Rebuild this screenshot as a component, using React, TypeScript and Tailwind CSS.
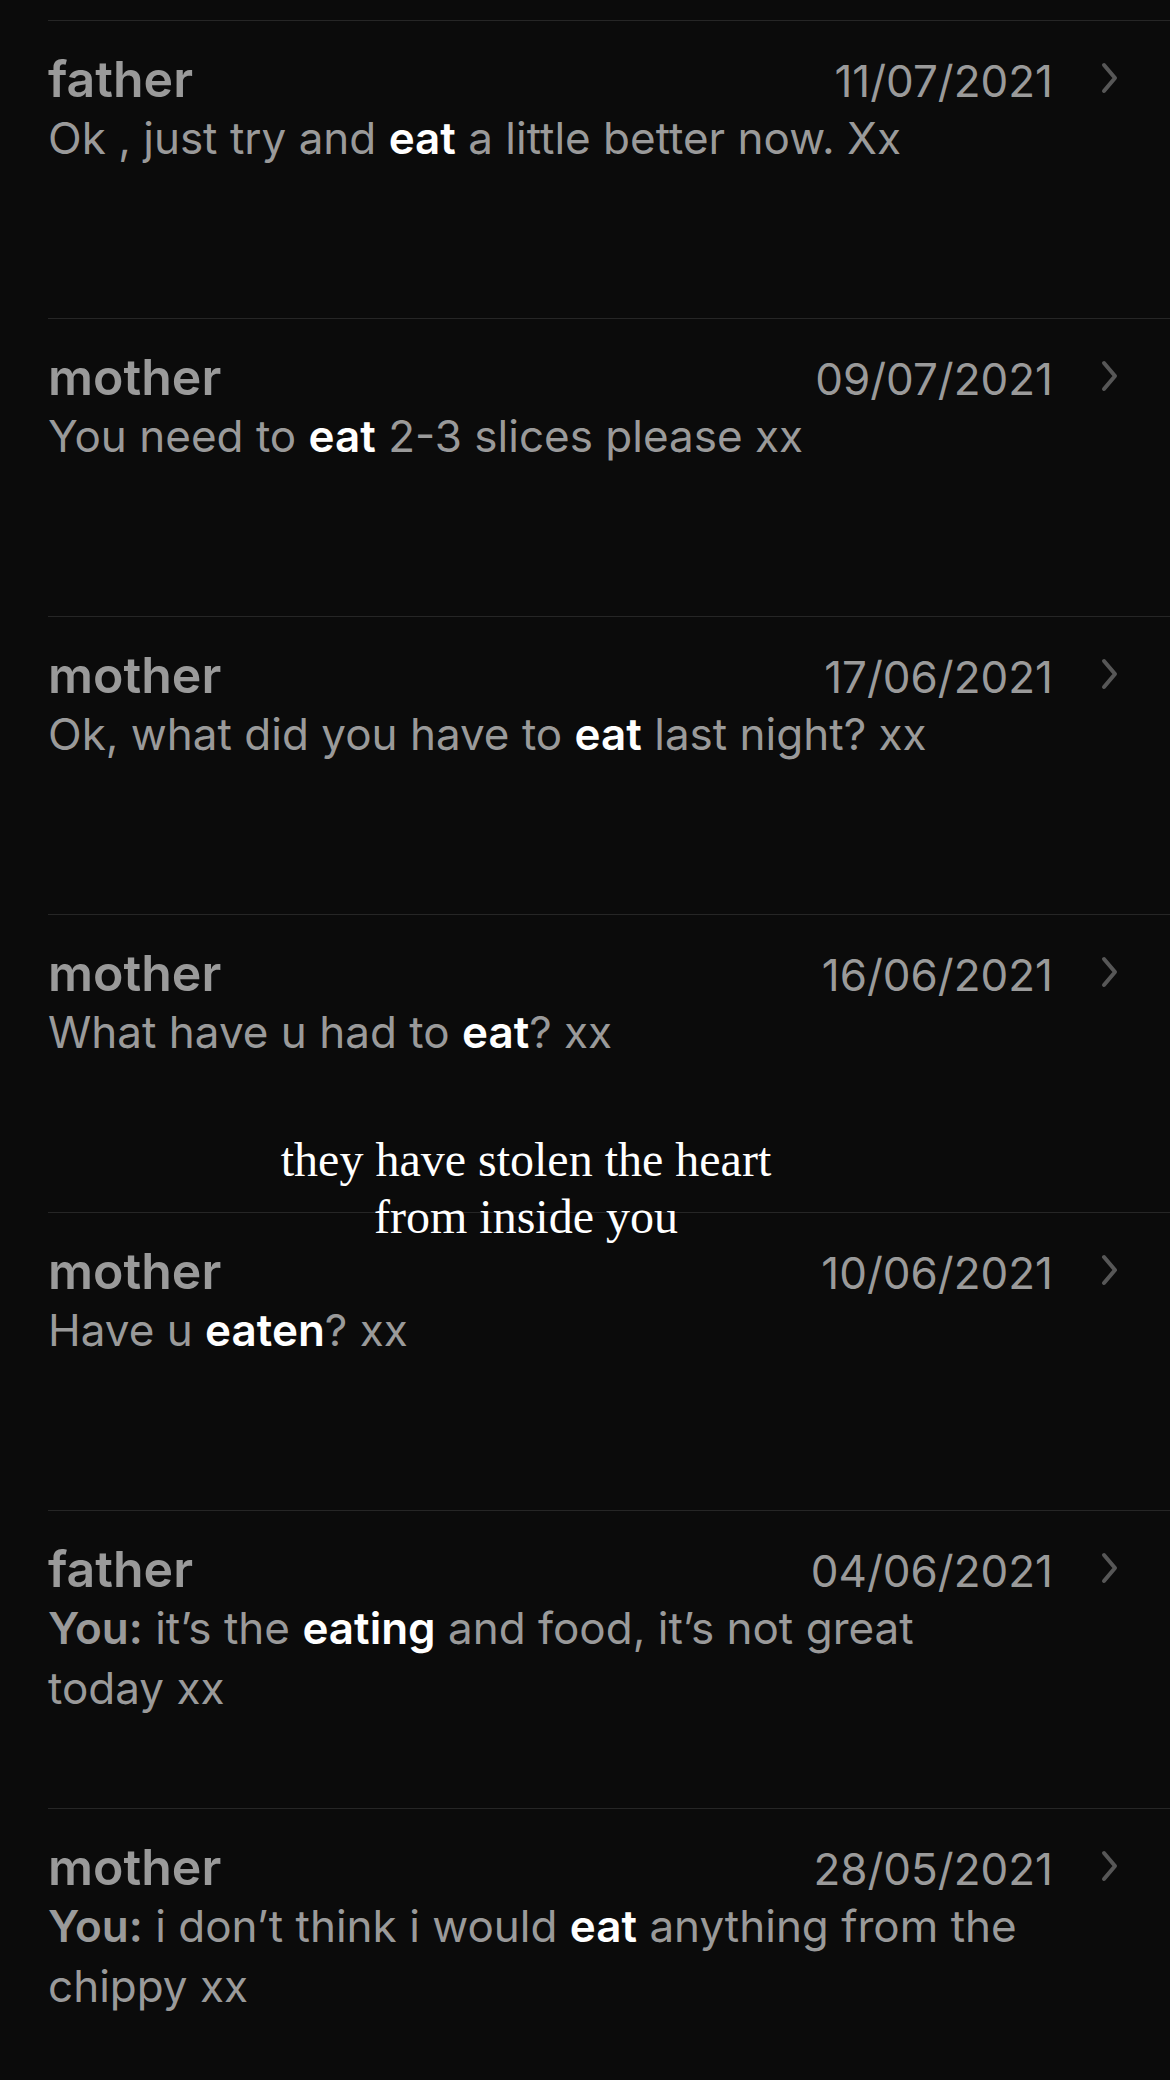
import React from "react";

type Part = { text: string; hit?: boolean; you?: boolean };

type Result = {
  from: string;
  date: string;
  parts: Part[];
};

const results: Result[] = [
  {
    from: "father",
    date: "11/07/2021",
    parts: [{ text: "Ok , just try and " }, { text: "eat", hit: true }, { text: " a little better now. Xx" }],
  },
  {
    from: "mother",
    date: "09/07/2021",
    parts: [{ text: "You need to " }, { text: "eat", hit: true }, { text: " 2-3 slices please xx" }],
  },
  {
    from: "mother",
    date: "17/06/2021",
    parts: [{ text: "Ok, what did you have to " }, { text: "eat", hit: true }, { text: " last night? xx" }],
  },
  {
    from: "mother",
    date: "16/06/2021",
    parts: [{ text: "What have u had to " }, { text: "eat", hit: true }, { text: "? xx" }],
  },
  {
    from: "mother",
    date: "10/06/2021",
    parts: [{ text: "Have u " }, { text: "eaten", hit: true }, { text: "? xx" }],
  },
  {
    from: "father",
    date: "04/06/2021",
    parts: [
      { text: "You:", you: true },
      { text: " it’s the " },
      { text: "eating", hit: true },
      { text: " and food, it’s not great today xx" },
    ],
  },
  {
    from: "mother",
    date: "28/05/2021",
    parts: [
      { text: "You:", you: true },
      { text: " i don’t think i would " },
      { text: "eat", hit: true },
      { text: " anything from the chippy xx" },
    ],
  },
];

function Chevron() {
  return (
    <svg width="22" height="32" viewBox="0 0 22 32" fill="none" className="shrink-0 -translate-y-[3px]">
      <path d="M5 3 L16 16 L5 29" stroke="#575757" strokeWidth="4" strokeLinecap="round" strokeLinejoin="round" />
    </svg>
  );
}

function ResultRow({ item }: { item: Result }) {
  return (
    <div className="ml-[48px] h-[298px] border-t border-[#262626] pt-[29px] pr-[49px]">
      <div className="flex items-baseline">
        <div className="flex-1 text-[50px] leading-[58px] font-semibold text-[#9a9a9a]">{item.from}</div>
        <div className="flex items-center gap-[46px]">
          <span className="text-[44px] leading-[58px] text-[#9a9a9a]">{item.date}</span>
          <Chevron />
        </div>
      </div>
      <p className="-mt-[2px] w-[972px] text-[44px] leading-[60px] text-[#9a9a9a]">
        {item.parts.map((p, i) => (
          <span
            key={i}
            className={p.hit ? "font-semibold text-white" : p.you ? "font-semibold" : ""}
          >
            {p.text}
          </span>
        ))}
      </p>
    </div>
  );
}

export default function App() {
  return (
    <div
      className="relative h-[2080px] w-[1170px] overflow-hidden bg-[#0b0b0b] pt-[20px]"
      style={{ fontFamily: "Inter, 'Noto Sans', sans-serif" }}
    >
      {results.map((item, i) => (
        <ResultRow key={i} item={item} />
      ))}

      {/* caption over the list */}
      <div className="absolute left-[226px] top-[1131px] w-[600px] text-center text-[48px] leading-[57px] text-white font-['Liberation_Serif',serif]">
        they have stolen the heart
        <br />
        from inside you
      </div>
    </div>
  );
}
